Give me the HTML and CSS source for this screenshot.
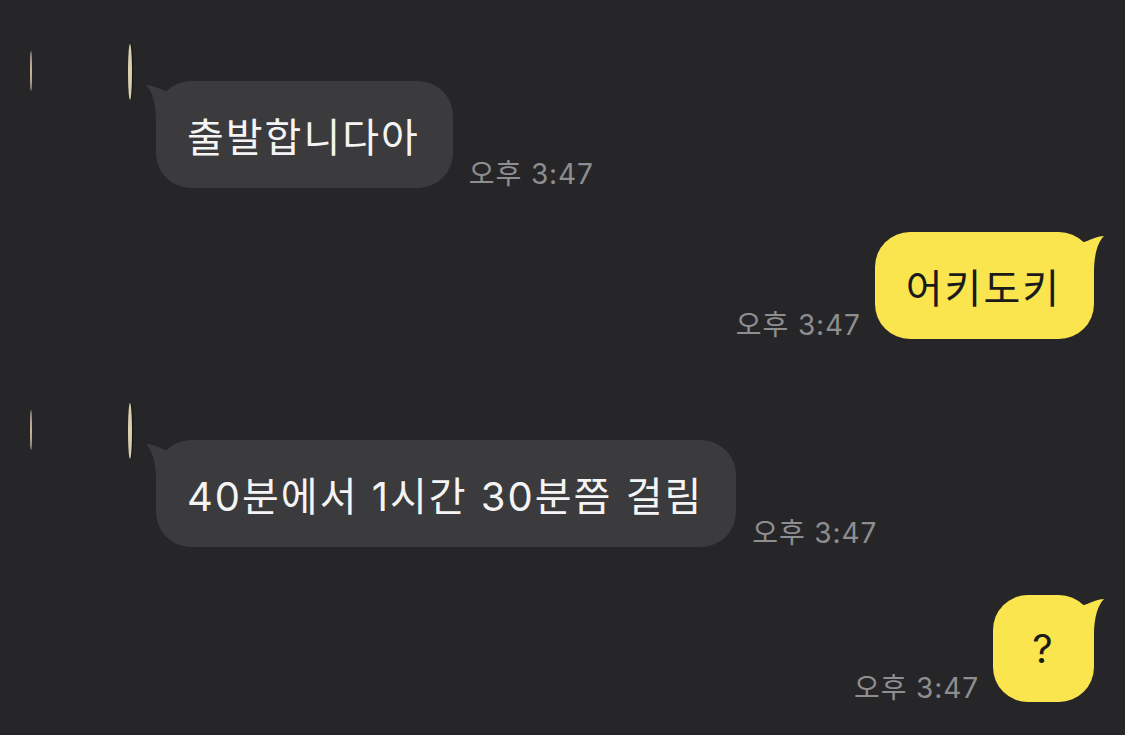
FILE: index.html
```html
<!DOCTYPE html>
<html lang="ko">
<head>
  <meta charset="UTF-8">
  <title>채팅</title>
  <link rel="stylesheet" href="styles.css">
</head>
<body>
  <div class="chat">

    <div class="msg-in first">
      <div class="avatar">
        <span class="sliver small"></span>
        <span class="sliver big"></span>
      </div>
      <div class="line">
        <div class="bubble dark">
          <svg class="tail-left" width="30" height="40" viewBox="0 0 30 40"><path d="M0 4 C7 4 14 8 22 11 L26 12 L26 40 L10 40 C10 22 6 10 0 4 Z"/></svg>
          출발합니다아
        </div>
        <span class="time">오후 3:47</span>
      </div>
    </div>

    <div class="msg-out">
      <span class="time">오후 3:47</span>
      <div class="bubble yellow">
        <svg class="tail-right" width="30" height="40" viewBox="0 0 30 40"><path d="M30 4 C23 4 16 8 8 11 L4 12 L4 40 L20 40 C20 22 24 10 30 4 Z"/></svg>
        어키도키
      </div>
    </div>

    <div class="msg-in">
      <div class="avatar">
        <span class="sliver small"></span>
        <span class="sliver big"></span>
      </div>
      <div class="line">
        <div class="bubble dark">
          <svg class="tail-left" width="30" height="40" viewBox="0 0 30 40"><path d="M0 4 C7 4 14 8 22 11 L26 12 L26 40 L10 40 C10 22 6 10 0 4 Z"/></svg>
          40분에서 1시간 30분쯤 걸림
        </div>
        <span class="time">오후 3:47</span>
      </div>
    </div>

    <div class="msg-out last">
      <span class="time">오후 3:47</span>
      <div class="bubble yellow short">
        <svg class="tail-right" width="30" height="40" viewBox="0 0 30 40"><path d="M30 4 C23 4 16 8 8 11 L4 12 L4 40 L20 40 C20 22 24 10 30 4 Z"/></svg>
        ?
      </div>
    </div>

  </div>
</body>
</html>
```

FILE: styles.css
```css
body {
  margin: 0;
  background-color: #262628;
  font-family: Inter, "Noto Sans CJK KR", sans-serif;
  overflow: hidden;
}

.chat {
  padding-top: 44px;
}

.msg-in {
  display: flex;
  align-items: flex-start;
  margin-top: 64px;
}

.msg-in.first {
  margin-top: 0;
}

.avatar {
  width: 156px;
  flex: none;
  display: flex;
  align-items: flex-start;
  height: 60px;
}

.sliver {
  display: block;
  border-radius: 50%;
  background-color: #d9ceb0;
}

.sliver.small {
  width: 2px;
  height: 40px;
  margin-left: 30px;
  margin-top: 7px;
  background-color: #bfb39a;
}

.sliver.big {
  width: 4px;
  height: 56px;
  margin-left: 96px;
  box-shadow: 1px 0 1px #14130f;
}

.line {
  display: flex;
  align-items: flex-end;
  gap: 16px;
  margin-top: 37px;
}

.msg-out {
  display: flex;
  justify-content: flex-end;
  align-items: flex-end;
  gap: 14px;
  padding-right: 31px;
  margin-top: 44px;
}

.msg-out.last {
  margin-top: 48px;
}

.bubble {
  position: relative;
  height: 107px;
  padding: 0 33px 0 31px;
  border-radius: 35px;
  display: flex;
  align-items: center;
  font-size: 40px;
  letter-spacing: 2px;
  box-sizing: border-box;
}

.bubble.dark {
  background-color: #3b3b3d;
  color: #f4f4f4;
}

.bubble.yellow {
  background-color: #fae54e;
  color: #1b1b1b;
}

.bubble.short {
  width: 101px;
  justify-content: center;
  padding: 0;
}

.tail-left {
  position: absolute;
  left: -10px;
  top: 0;
  fill: #3b3b3d;
}

.tail-right {
  position: absolute;
  right: -10px;
  top: 0;
  fill: #fae54e;
}

.time {
  font-size: 28px;
  letter-spacing: 0.9px;
  color: #8e8e90;
  line-height: 1;
}
```
